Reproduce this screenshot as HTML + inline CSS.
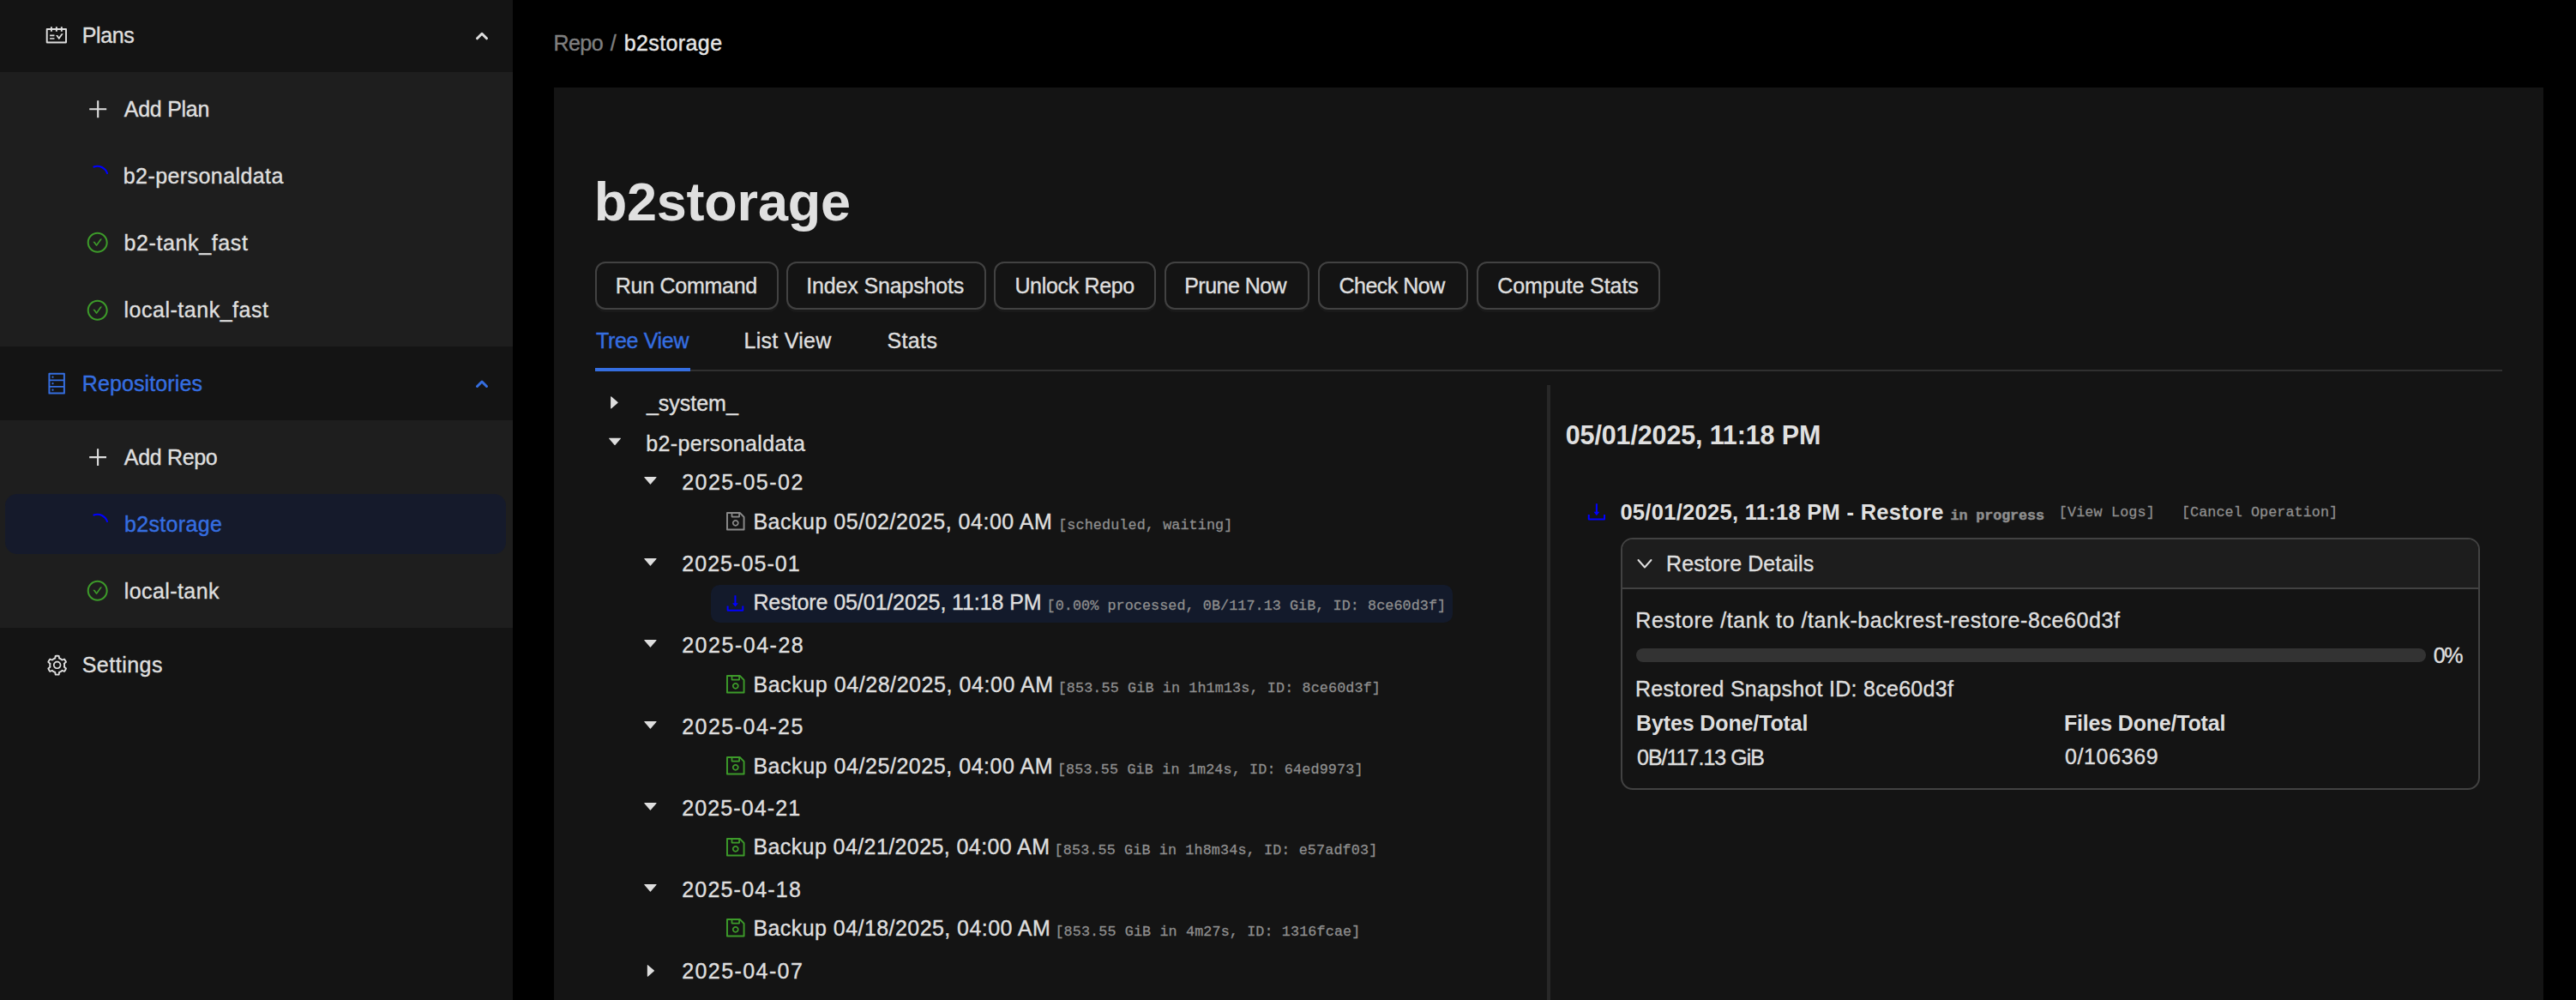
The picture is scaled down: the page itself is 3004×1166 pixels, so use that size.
<!DOCTYPE html>
<html><head><meta charset="utf-8">
<style>
html,body{margin:0;padding:0;}
body{width:3004px;height:1166px;background:#000;position:relative;overflow:hidden;font-family:"Liberation Sans",sans-serif;color:#dedede;}
.a{position:absolute;}
.t{position:absolute;white-space:pre;line-height:0;}
.s{font-family:"Liberation Sans",sans-serif;-webkit-text-stroke:0.4px currentColor;}
.m{font-family:"Liberation Mono",monospace;-webkit-text-stroke:0.3px currentColor;}
.btn{position:absolute;top:305px;height:52px;border:2px solid #424242;border-radius:12px;background:#141414;box-shadow:0 3px 0 #1a1a1a;}
svg{position:absolute;overflow:visible;}
</style></head><body>
<!-- sidebar -->
<div class="a" style="left:0;top:0;width:598px;height:1166px;background:#141414"></div>
<div class="a" style="left:0;top:84px;width:598px;height:320px;background:#1e1e1e"></div>
<div class="a" style="left:0;top:490px;width:598px;height:242px;background:#1e1e1e"></div>
<div class="a" style="left:6px;top:576px;width:584px;height:70px;background:#151a2b;border-radius:14px"></div>

<!-- main card -->
<div class="a" style="left:646px;top:102px;width:2320px;height:1064px;background:#141414"></div>

<!-- buttons -->
<div class="btn" style="left:694px;width:210px"></div>
<div class="btn" style="left:916.5px;width:229px"></div>
<div class="btn" style="left:1158.7px;width:185.3px"></div>
<div class="btn" style="left:1357.5px;width:165.8px"></div>
<div class="btn" style="left:1536.8px;width:171.2px"></div>
<div class="btn" style="left:1721.6px;width:210.4px"></div>

<!-- tabs -->
<div class="a" style="left:694px;top:431px;width:2224px;height:2px;background:#303030"></div>
<div class="a" style="left:694px;top:429px;width:111px;height:4px;background:#356ee0"></div>

<!-- restore highlight -->
<div class="a" style="left:829px;top:682px;width:865px;height:44px;background:#131a2b;border-radius:10px"></div>

<!-- divider -->
<div class="a" style="left:1804px;top:449px;width:4px;height:717px;background:#282828"></div>

<!-- details card -->
<div class="a" style="left:1890px;top:627px;width:998px;height:289.5px;border:2px solid #424242;border-radius:14px;background:#141414;overflow:hidden">
  <div class="a" style="left:0;top:0;width:998px;height:56px;background:#1d1d1d;border-bottom:2px solid #424242"></div>
</div>
<div class="a" style="left:1908px;top:756px;width:921px;height:16px;background:#333;border-radius:8px"></div>

<!-- ICONS -->
<svg style="left:52.27px;top:26.96px" width="27.75" height="27.75" viewBox="0 0 1024 1024"><path fill="#dedede" d="M928 224H768v-56c0-4.4-3.6-8-8-8h-56c-4.4 0-8 3.6-8 8v56H548v-56c0-4.4-3.6-8-8-8h-56c-4.4 0-8 3.6-8 8v56H328v-56c0-4.4-3.6-8-8-8h-56c-4.4 0-8 3.6-8 8v56H96c-17.7 0-32 14.3-32 32v576c0 17.7 14.3 32 32 32h832c17.7 0 32-14.3 32-32V256c0-17.7-14.3-32-32-32zm-40 568H136V296h120v56c0 4.4 3.6 8 8 8h56c4.4 0 8-3.6 8-8v-56h148v56c0 4.4 3.6 8 8 8h56c4.4 0 8-3.6 8-8v-56h148v56c0 4.4 3.6 8 8 8h56c4.4 0 8-3.6 8-8v-56h120v496zM416 496H232c-4.4 0-8 3.6-8 8v48c0 4.4 3.6 8 8 8h184c4.4 0 8-3.6 8-8v-48c0-4.4-3.6-8-8-8zm0 136H232c-4.4 0-8 3.6-8 8v48c0 4.4 3.6 8 8 8h184c4.4 0 8-3.6 8-8v-48c0-4.4-3.6-8-8-8zm308.2-177.4L620.6 598.3l-52.8-73.1c-3-4.2-7.8-6.6-12.9-6.6H500c-6.5 0-10.3 7.4-6.5 12.7l114.1 158.2a15.9 15.9 0 0025.8 0l165-228.7c3.8-5.3 0-12.7-6.5-12.7H737c-5-.1-9.8 2.4-12.8 6.5z"/></svg>
<svg style="left:51.58px;top:433.13px" width="28.32" height="28.32" viewBox="0 0 1024 1024"><path fill="#356ee0" d="M832 64H192c-17.7 0-32 14.3-32 32v832c0 17.7 14.3 32 32 32h640c17.7 0 32-14.3 32-32V96c0-17.7-14.3-32-32-32zm-600 72h560v208H232V136zm560 480H232V408h560v208zm0 272H232V680h560v208zM304 240a40 40 0 1080 0 40 40 0 10-80 0zm0 272a40 40 0 1080 0 40 40 0 10-80 0zm0 272a40 40 0 1080 0 40 40 0 10-80 0z"/></svg>
<svg style="left:52.72px;top:761.59px" width="27.33" height="27.33" viewBox="0 0 1024 1024"><path fill="#dedede" d="M924.8 625.7l-65.5-56c3.1-19 4.7-38.4 4.7-57.8s-1.6-38.8-4.7-57.8l65.5-56a32.03 32.03 0 009.3-35.2l-.9-2.6a443.74 443.74 0 00-79.7-137.9l-1.8-2.1a32.12 32.12 0 00-35.1-9.5l-81.3 28.9c-30-24.6-63.5-44-99.7-57.6l-15.7-85a32.05 32.05 0 00-25.8-25.7l-2.7-.5c-52.1-9.4-106.9-9.4-159 0l-2.7.5a32.05 32.05 0 00-25.8 25.7l-15.8 85.4a351.86 351.86 0 00-99 57.4l-81.9-29.1a32 32 0 00-35.1 9.5l-1.8 2.1a446.02 446.02 0 00-79.7 137.9l-.9 2.6c-4.5 12.5-.8 26.5 9.3 35.2l66.3 56.6c-3.1 18.8-4.6 38-4.6 57.1 0 19.2 1.5 38.4 4.6 57.1L99 625.5a32.03 32.03 0 00-9.3 35.2l.9 2.6c18.1 50.4 44.9 96.9 79.7 137.9l1.8 2.1a32.12 32.12 0 0035.1 9.5l81.9-29.1c29.8 24.5 63.1 43.9 99 57.4l15.8 85.4a32.05 32.05 0 0025.8 25.7l2.7.5a449.4 449.4 0 00159 0l2.7-.5a32.05 32.05 0 0025.8-25.7l15.7-85a350 350 0 0099.7-57.6l81.3 28.9a32 32 0 0035.1-9.5l1.8-2.1c34.8-41.1 61.6-87.5 79.7-137.9l.9-2.6c4.5-12.3.8-26.3-9.3-35zM788.3 465.9c2.5 15.1 3.8 30.6 3.8 46.1s-1.3 31-3.8 46.1l-6.6 40.1 74.7 63.9a370.03 370.03 0 01-42.6 73.6L721 702.8l-31.4 25.8c-23.9 19.6-50.5 35-79.3 45.8l-38.1 14.3-17.9 97a377.5 377.5 0 01-85 0l-17.9-97.2-37.8-14.5c-28.5-10.8-55-26.2-78.7-45.7l-31.4-25.9-93.4 33.2c-17-22.9-31.2-47.6-42.6-73.6l75.5-64.5-6.5-40c-2.4-14.9-3.7-30.3-3.7-45.5 0-15.3 1.2-30.6 3.7-45.5l6.5-40-75.5-64.5c11.3-26.1 25.6-50.7 42.6-73.6l93.4 33.2 31.4-25.9c23.7-19.5 50.2-34.9 78.7-45.7l37.9-14.3 17.9-97.2c28.1-3.2 56.8-3.2 85 0l17.9 97 38.1 14.3c28.7 10.8 55.4 26.2 79.3 45.8l31.4 25.8 92.8-32.9c17 22.9 31.2 47.6 42.6 73.6L781.8 426l6.5 39.9zM512 326c-97.2 0-176 78.8-176 176s78.8 176 176 176 176-78.8 176-176-78.8-176-176-176zm79.2 255.2A111.6 111.6 0 01512 614c-29.9 0-58-11.7-79.2-32.8A111.6 111.6 0 01400 502c0-29.9 11.7-58 32.8-79.2C454 401.6 482.1 390 512 390c29.9 0 58 11.6 79.2 32.8A111.6 111.6 0 01624 502c0 29.9-11.7 58-32.8 79.2z"/></svg>
<svg style="left:99.78px;top:112.78px" width="28.44" height="28.44" viewBox="0 0 1024 1024"><path fill="#dedede" d="M482 152h60q8 0 8 8v704q0 8-8 8h-60q-8 0-8-8V160q0-8 8-8z M160 474h704q8 0 8 8v60q0 8-8 8H160q-8 0-8-8v-60q0-8 8-8z"/></svg>
<svg style="left:99.81px;top:519.01px" width="28.23" height="28.23" viewBox="0 0 1024 1024"><path fill="#dedede" d="M482 152h60q8 0 8 8v704q0 8-8 8h-60q-8 0-8-8V160q0-8 8-8z M160 474h704q8 0 8 8v60q0 8-8 8H160q-8 0-8-8v-60q0-8 8-8z"/></svg>
<svg style="left:100.29px;top:269.29px" width="27.43" height="27.43" viewBox="0 0 1024 1024"><path fill="#3d9b2a" d="M699 353h-46.9c-10.2 0-19.9 4.9-25.9 13.3L469 584.3l-71.2-98.8c-6-8.3-15.6-13.3-25.9-13.3H325c-6.5 0-10.3 7.4-6.5 12.7l124.6 172.8a31.8 31.8 0 0051.7 0l210.6-292c3.9-5.3.1-12.7-6.4-12.7z M512 64C264.6 64 64 264.6 64 512s200.6 448 448 448 448-200.6 448-448S759.4 64 512 64zm0 820c-205.4 0-372-166.6-372-372s166.6-372 372-372 372 166.6 372 372-166.6 372-372 372z"/></svg>
<svg style="left:100.29px;top:347.79px" width="27.43" height="27.43" viewBox="0 0 1024 1024"><path fill="#3d9b2a" d="M699 353h-46.9c-10.2 0-19.9 4.9-25.9 13.3L469 584.3l-71.2-98.8c-6-8.3-15.6-13.3-25.9-13.3H325c-6.5 0-10.3 7.4-6.5 12.7l124.6 172.8a31.8 31.8 0 0051.7 0l210.6-292c3.9-5.3.1-12.7-6.4-12.7z M512 64C264.6 64 64 264.6 64 512s200.6 448 448 448 448-200.6 448-448S759.4 64 512 64zm0 820c-205.4 0-372-166.6-372-372s166.6-372 372-372 372 166.6 372 372-166.6 372-372 372z"/></svg>
<svg style="left:100.29px;top:675.29px" width="27.43" height="27.43" viewBox="0 0 1024 1024"><path fill="#3d9b2a" d="M699 353h-46.9c-10.2 0-19.9 4.9-25.9 13.3L469 584.3l-71.2-98.8c-6-8.3-15.6-13.3-25.9-13.3H325c-6.5 0-10.3 7.4-6.5 12.7l124.6 172.8a31.8 31.8 0 0051.7 0l210.6-292c3.9-5.3.1-12.7-6.4-12.7z M512 64C264.6 64 64 264.6 64 512s200.6 448 448 448 448-200.6 448-448S759.4 64 512 64zm0 820c-205.4 0-372-166.6-372-372s166.6-372 372-372 372 166.6 372 372-166.6 372-372 372z"/></svg>
<svg style="left:0;top:0" width="1" height="1"><path d="M 109.5 194.5 A 12 12 0 0 1 125 202" fill="none" stroke="#0000ff" stroke-width="2.2" stroke-linecap="round"/></svg>
<svg style="left:0;top:0" width="1" height="1"><path d="M 109.5 600.5 A 12 12 0 0 1 125 608" fill="none" stroke="#0000ff" stroke-width="2.2" stroke-linecap="round"/></svg>
<svg style="left:0;top:0" width="1" height="1"><polyline points="556.5,44.8 562,39.3 567.5,44.8" fill="none" stroke="#dedede" stroke-width="3" stroke-linecap="round" stroke-linejoin="round"/></svg>
<svg style="left:0;top:0" width="1" height="1"><polyline points="556.5,450.5 562,445 567.5,450.5" fill="none" stroke="#356ee0" stroke-width="3" stroke-linecap="round" stroke-linejoin="round"/></svg>
<svg style="left:706.10px;top:459.25px" width="20.83" height="20.83" viewBox="0 0 1024 1024"><path fill="#dedede" d="M715.8 493.5L335 165.1c-14.2-12.2-35-1.2-35 18.5v656.8c0 19.7 20.8 30.7 35 18.5l380.8-328.4c10.9-9.4 10.9-27.6 0-37z"/></svg>
<svg style="left:706.87px;top:504.92px" width="20.06" height="20.06" viewBox="0 0 1024 1024"><path fill="#dedede" d="M840.4 300H183.6c-19.7 0-30.7 20.8-18.5 35l328.4 380.8c9.4 10.9 27.5 10.9 37 0L858.9 335c12.2-14.2 1.2-35-18.5-35z"/></svg>
<svg style="left:748.44px;top:550.49px" width="20.86" height="20.86" viewBox="0 0 1024 1024"><path fill="#dedede" d="M840.4 300H183.6c-19.7 0-30.7 20.8-18.5 35l328.4 380.8c9.4 10.9 27.5 10.9 37 0L858.9 335c12.2-14.2 1.2-35-18.5-35z"/></svg>
<svg style="left:748.44px;top:645.49px" width="20.86" height="20.86" viewBox="0 0 1024 1024"><path fill="#dedede" d="M840.4 300H183.6c-19.7 0-30.7 20.8-18.5 35l328.4 380.8c9.4 10.9 27.5 10.9 37 0L858.9 335c12.2-14.2 1.2-35-18.5-35z"/></svg>
<svg style="left:748.44px;top:740.49px" width="20.86" height="20.86" viewBox="0 0 1024 1024"><path fill="#dedede" d="M840.4 300H183.6c-19.7 0-30.7 20.8-18.5 35l328.4 380.8c9.4 10.9 27.5 10.9 37 0L858.9 335c12.2-14.2 1.2-35-18.5-35z"/></svg>
<svg style="left:748.44px;top:835.49px" width="20.86" height="20.86" viewBox="0 0 1024 1024"><path fill="#dedede" d="M840.4 300H183.6c-19.7 0-30.7 20.8-18.5 35l328.4 380.8c9.4 10.9 27.5 10.9 37 0L858.9 335c12.2-14.2 1.2-35-18.5-35z"/></svg>
<svg style="left:748.44px;top:930.09px" width="20.86" height="20.86" viewBox="0 0 1024 1024"><path fill="#dedede" d="M840.4 300H183.6c-19.7 0-30.7 20.8-18.5 35l328.4 380.8c9.4 10.9 27.5 10.9 37 0L858.9 335c12.2-14.2 1.2-35-18.5-35z"/></svg>
<svg style="left:748.44px;top:1025.29px" width="20.86" height="20.86" viewBox="0 0 1024 1024"><path fill="#dedede" d="M840.4 300H183.6c-19.7 0-30.7 20.8-18.5 35l328.4 380.8c9.4 10.9 27.5 10.9 37 0L858.9 335c12.2-14.2 1.2-35-18.5-35z"/></svg>
<svg style="left:748.78px;top:1121.80px" width="19.86" height="19.86" viewBox="0 0 1024 1024"><path fill="#dedede" d="M715.8 493.5L335 165.1c-14.2-12.2-35-1.2-35 18.5v656.8c0 19.7 20.8 30.7 35 18.5l380.8-328.4c10.9-9.4 10.9-27.6 0-37z"/></svg>
<svg style="left:843.98px;top:594.28px" width="27.58" height="27.58" viewBox="0 0 1024 1024"><path fill="#8a8a8a" d="M893.3 293.3L730.7 130.7c-7.5-7.5-16.7-13-26.7-16V112H144c-17.7 0-32 14.3-32 32v736c0 17.7 14.3 32 32 32h736c17.7 0 32-14.3 32-32V338.5c0-17-6.7-33.2-18.7-45.2zM384 184h256v104H384V184zm456 656H184V184h136v136c0 17.7 14.3 32 32 32h320c17.7 0 32-14.3 32-32V205.8l136 136V840zM512 442c-79.5 0-144 64.5-144 144s64.5 144 144 144 144-64.5 144-144-64.5-144-144-144zm0 224c-44.2 0-80-35.8-80-80s35.8-80 80-80 80 35.8 80 80-35.8 80-80 80z"/></svg>
<svg style="left:843.98px;top:784.08px" width="27.58" height="27.58" viewBox="0 0 1024 1024"><path fill="#3d9b2a" d="M893.3 293.3L730.7 130.7c-7.5-7.5-16.7-13-26.7-16V112H144c-17.7 0-32 14.3-32 32v736c0 17.7 14.3 32 32 32h736c17.7 0 32-14.3 32-32V338.5c0-17-6.7-33.2-18.7-45.2zM384 184h256v104H384V184zm456 656H184V184h136v136c0 17.7 14.3 32 32 32h320c17.7 0 32-14.3 32-32V205.8l136 136V840zM512 442c-79.5 0-144 64.5-144 144s64.5 144 144 144 144-64.5 144-144-64.5-144-144-144zm0 224c-44.2 0-80-35.8-80-80s35.8-80 80-80 80 35.8 80 80-35.8 80-80 80z"/></svg>
<svg style="left:843.98px;top:878.98px" width="27.58" height="27.58" viewBox="0 0 1024 1024"><path fill="#3d9b2a" d="M893.3 293.3L730.7 130.7c-7.5-7.5-16.7-13-26.7-16V112H144c-17.7 0-32 14.3-32 32v736c0 17.7 14.3 32 32 32h736c17.7 0 32-14.3 32-32V338.5c0-17-6.7-33.2-18.7-45.2zM384 184h256v104H384V184zm456 656H184V184h136v136c0 17.7 14.3 32 32 32h320c17.7 0 32-14.3 32-32V205.8l136 136V840zM512 442c-79.5 0-144 64.5-144 144s64.5 144 144 144 144-64.5 144-144-64.5-144-144-144zm0 224c-44.2 0-80-35.8-80-80s35.8-80 80-80 80 35.8 80 80-35.8 80-80 80z"/></svg>
<svg style="left:843.98px;top:973.58px" width="27.58" height="27.58" viewBox="0 0 1024 1024"><path fill="#3d9b2a" d="M893.3 293.3L730.7 130.7c-7.5-7.5-16.7-13-26.7-16V112H144c-17.7 0-32 14.3-32 32v736c0 17.7 14.3 32 32 32h736c17.7 0 32-14.3 32-32V338.5c0-17-6.7-33.2-18.7-45.2zM384 184h256v104H384V184zm456 656H184V184h136v136c0 17.7 14.3 32 32 32h320c17.7 0 32-14.3 32-32V205.8l136 136V840zM512 442c-79.5 0-144 64.5-144 144s64.5 144 144 144 144-64.5 144-144-64.5-144-144-144zm0 224c-44.2 0-80-35.8-80-80s35.8-80 80-80 80 35.8 80 80-35.8 80-80 80z"/></svg>
<svg style="left:843.98px;top:1068.28px" width="27.58" height="27.58" viewBox="0 0 1024 1024"><path fill="#3d9b2a" d="M893.3 293.3L730.7 130.7c-7.5-7.5-16.7-13-26.7-16V112H144c-17.7 0-32 14.3-32 32v736c0 17.7 14.3 32 32 32h736c17.7 0 32-14.3 32-32V338.5c0-17-6.7-33.2-18.7-45.2zM384 184h256v104H384V184zm456 656H184V184h136v136c0 17.7 14.3 32 32 32h320c17.7 0 32-14.3 32-32V205.8l136 136V840zM512 442c-79.5 0-144 64.5-144 144s64.5 144 144 144 144-64.5 144-144-64.5-144-144-144zm0 224c-44.2 0-80-35.8-80-80s35.8-80 80-80 80 35.8 80 80-35.8 80-80 80z"/></svg>
<svg style="left:844.37px;top:689.79px" width="26.92" height="26.92" viewBox="0 0 1024 1024"><path fill="#0000ff" d="M505.7 661a8 8 0 0012.6 0l112-141.7c4.1-5.2.4-12.9-6.3-12.9h-74.1V168c0-4.4-3.6-8-8-8h-60c-4.4 0-8 3.6-8 8v338.3H400c-6.7 0-10.4 7.7-6.3 12.9l112 141.8zM878 626h-60c-4.4 0-8 3.6-8 8v154H214V634c0-4.4-3.6-8-8-8h-60c-4.4 0-8 3.6-8 8v198c0 17.7 14.3 32 32 32h684c17.7 0 32-14.3 32-32V634c0-4.4-3.6-8-8-8z"/></svg>
<svg style="left:1848.25px;top:582.96px" width="27.79" height="27.79" viewBox="0 0 1024 1024"><path fill="#0000ff" d="M505.7 661a8 8 0 0012.6 0l112-141.7c4.1-5.2.4-12.9-6.3-12.9h-74.1V168c0-4.4-3.6-8-8-8h-60c-4.4 0-8 3.6-8 8v338.3H400c-6.7 0-10.4 7.7-6.3 12.9l112 141.8zM878 626h-60c-4.4 0-8 3.6-8 8v154H214V634c0-4.4-3.6-8-8-8h-60c-4.4 0-8 3.6-8 8v198c0 17.7 14.3 32 32 32h684c17.7 0 32-14.3 32-32V634c0-4.4-3.6-8-8-8z"/></svg>
<svg style="left:0;top:0" width="1" height="1"><polyline points="1910.5,653 1918,661.5 1925.5,653" fill="none" stroke="#dedede" stroke-width="2" stroke-linecap="round" stroke-linejoin="round"/></svg>

<!-- TEXTS -->
<div class="t s" style="left:95.7px;top:41px;font-size:25px;letter-spacing:-0.38px">Plans</div>
<div class="t s" style="left:144.8px;top:127px;font-size:25px;letter-spacing:-0.27px">Add Plan</div>
<div class="t s" style="left:143.8px;top:205px;font-size:25px;letter-spacing:0.42px">b2-personaldata</div>
<div class="t s" style="left:144.5px;top:283px;font-size:25px;letter-spacing:0.62px">b2-tank_fast</div>
<div class="t s" style="left:144.5px;top:361px;font-size:25px;letter-spacing:0.52px">local-tank_fast</div>
<div class="t s" style="left:95.8px;top:447px;font-size:25px;letter-spacing:0.11px;color:#356ee0">Repositories</div>
<div class="t s" style="left:144.8px;top:533px;font-size:25px;letter-spacing:-0.33px">Add Repo</div>
<div class="t s" style="left:144.9px;top:611px;font-size:25px;letter-spacing:0.35px;color:#356ee0">b2storage</div>
<div class="t s" style="left:144.8px;top:689px;font-size:25px;letter-spacing:0.41px">local-tank</div>
<div class="t s" style="left:95.7px;top:775px;font-size:25px;letter-spacing:0.5px">Settings</div>
<div class="t s" style="left:645.4px;top:50px;font-size:25px;letter-spacing:-0.49px;color:#7f7f7f">Repo</div>
<div class="t s" style="left:711.7px;top:50px;font-size:25px;color:#7f7f7f">/</div>
<div class="t s" style="left:727.7px;top:50px;font-size:25px;letter-spacing:0.4px;color:#e6e6e6">b2storage</div>
<div class="t s" style="left:692.7px;top:235px;font-size:63px;font-weight:700;-webkit-text-stroke:0;letter-spacing:-0.22px;color:#e0e0e0">b2storage</div>
<div class="t s" style="left:717.7px;top:333px;font-size:25px;letter-spacing:-0.26px">Run Command</div>
<div class="t s" style="left:940.2px;top:333px;font-size:25px;letter-spacing:-0.15px">Index Snapshots</div>
<div class="t s" style="left:1183.4px;top:333px;font-size:25px;letter-spacing:-0.33px">Unlock Repo</div>
<div class="t s" style="left:1381.2px;top:333px;font-size:25px;letter-spacing:-0.53px">Prune Now</div>
<div class="t s" style="left:1561.5px;top:333px;font-size:25px;letter-spacing:-0.5px">Check Now</div>
<div class="t s" style="left:1746.3px;top:333px;font-size:25px;letter-spacing:-0.07px">Compute Stats</div>
<div class="t s" style="left:695px;top:397px;font-size:25px;letter-spacing:-0.34px;color:#356ee0">Tree View</div>
<div class="t s" style="left:867.5px;top:397px;font-size:25px;letter-spacing:0.27px">List View</div>
<div class="t s" style="left:1034.6px;top:397px;font-size:25px;letter-spacing:0.33px">Stats</div>
<div class="t s" style="left:753.9px;top:470px;font-size:25px;letter-spacing:-0.01px">_system_</div>
<div class="t s" style="left:753.2px;top:517px;font-size:25px;letter-spacing:0.36px">b2-personaldata</div>
<div class="t s" style="left:795.2px;top:562px;font-size:25px;letter-spacing:1.47px">2025-05-02</div>
<div class="t s" style="left:878.4px;top:608px;font-size:25px;letter-spacing:0.52px">Backup 05/02/2025, 04:00 AM</div>
<div class="t m" style="left:1234.2px;top:613px;font-size:16.75px;letter-spacing:0.11px;color:#8e8e8e">[scheduled, waiting]</div>
<div class="t s" style="left:795.2px;top:657px;font-size:25px;letter-spacing:1.07px">2025-05-01</div>
<div class="t s" style="left:878.4px;top:702px;font-size:25px;letter-spacing:-0.09px">Restore 05/01/2025, 11:18 PM</div>
<div class="t m" style="left:1220.6px;top:707px;font-size:16.75px;letter-spacing:0.07px;color:#8e8e8e">[0.00% processed, 0B/117.13 GiB, ID: 8ce60d3f]</div>
<div class="t s" style="left:795.2px;top:752px;font-size:25px;letter-spacing:1.52px">2025-04-28</div>
<div class="t s" style="left:878.4px;top:798px;font-size:25px;letter-spacing:0.57px">Backup 04/28/2025, 04:00 AM</div>
<div class="t m" style="left:1233.7px;top:803px;font-size:16.75px;letter-spacing:0.12px;color:#8e8e8e">[853.55 GiB in 1h1m13s, ID: 8ce60d3f]</div>
<div class="t s" style="left:795.2px;top:847px;font-size:25px;letter-spacing:1.48px">2025-04-25</div>
<div class="t s" style="left:878.4px;top:893px;font-size:25px;letter-spacing:0.55px">Backup 04/25/2025, 04:00 AM</div>
<div class="t m" style="left:1232.9px;top:898px;font-size:16.75px;letter-spacing:0.14px;color:#8e8e8e">[853.55 GiB in 1m24s, ID: 64ed9973]</div>
<div class="t s" style="left:795.2px;top:942px;font-size:25px;letter-spacing:1.11px">2025-04-21</div>
<div class="t s" style="left:878.4px;top:987px;font-size:25px;letter-spacing:0.41px">Backup 04/21/2025, 04:00 AM</div>
<div class="t m" style="left:1229.6px;top:992px;font-size:16.75px;letter-spacing:0.13px;color:#8e8e8e">[853.55 GiB in 1h8m34s, ID: e57adf03]</div>
<div class="t s" style="left:795.2px;top:1037px;font-size:25px;letter-spacing:1.2px">2025-04-18</div>
<div class="t s" style="left:878.4px;top:1082px;font-size:25px;letter-spacing:0.44px">Backup 04/18/2025, 04:00 AM</div>
<div class="t m" style="left:1230.4px;top:1087px;font-size:16.75px;letter-spacing:0.12px;color:#8e8e8e">[853.55 GiB in 4m27s, ID: 1316fcae]</div>
<div class="t s" style="left:795.2px;top:1132px;font-size:25px;letter-spacing:1.42px">2025-04-07</div>
<div class="t s" style="left:1825.8px;top:507px;font-size:30.5px;font-weight:700;-webkit-text-stroke:0;letter-spacing:-0.14px;color:#e0e0e0">05/01/2025, 11:18 PM</div>
<div class="t s" style="left:1889.4px;top:597px;font-size:25.5px;font-weight:700;-webkit-text-stroke:0;letter-spacing:0.29px;color:#e0e0e0">05/01/2025, 11:18 PM - Restore</div>
<div class="t m" style="left:2274.5px;top:602px;font-size:16.75px;font-weight:700;-webkit-text-stroke:0.5px currentColor;letter-spacing:-0.11px;color:#8e8e8e">in progress</div>
<div class="t m" style="left:2400.8px;top:598px;font-size:16.75px;letter-spacing:0.14px;color:#8e8e8e">[View Logs]</div>
<div class="t m" style="left:2544px;top:598px;font-size:16.75px;letter-spacing:0.07px;color:#8e8e8e">[Cancel Operation]</div>
<div class="t s" style="left:1943px;top:657px;font-size:25px;letter-spacing:0.09px">Restore Details</div>
<div class="t s" style="left:1907.3px;top:723px;font-size:25px;letter-spacing:0.57px">Restore /tank to /tank-backrest-restore-8ce60d3f</div>
<div class="t s" style="left:2837.8px;top:764px;font-size:25px;letter-spacing:-1.4px">0%</div>
<div class="t s" style="left:1907px;top:803px;font-size:25px;letter-spacing:0.28px">Restored Snapshot ID: 8ce60d3f</div>
<div class="t s" style="left:1908px;top:843px;font-size:25px;font-weight:700;-webkit-text-stroke:0;letter-spacing:-0.12px">Bytes Done/Total</div>
<div class="t s" style="left:2407px;top:843px;font-size:25px;font-weight:700;-webkit-text-stroke:0;letter-spacing:-0.19px">Files Done/Total</div>
<div class="t s" style="left:1909px;top:883px;font-size:25px;letter-spacing:-0.99px">0B/117.13 GiB</div>
<div class="t s" style="left:2408px;top:882px;font-size:25px;letter-spacing:0.62px">0/106369</div>
</body></html>
